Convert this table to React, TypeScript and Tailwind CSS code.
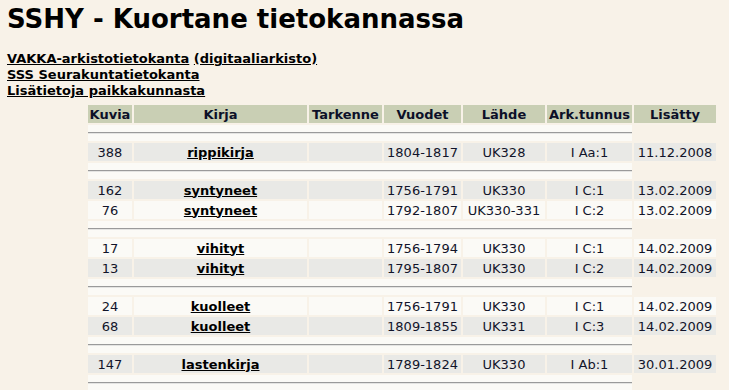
import React from 'react';

type Row = {
  kuvia: string;
  kirja: string;
  vuodet: string;
  lahde: string;
  ark: string;
  lisatty: string;
  gray: boolean;
};

const groups: Row[][] = [
  [{ kuvia: '388', kirja: 'rippikirja', vuodet: '1804-1817', lahde: 'UK328', ark: 'I Aa:1', lisatty: '11.12.2008', gray: true }],
  [
    { kuvia: '162', kirja: 'syntyneet', vuodet: '1756-1791', lahde: 'UK330', ark: 'I C:1', lisatty: '13.02.2009', gray: true },
    { kuvia: '76', kirja: 'syntyneet', vuodet: '1792-1807', lahde: 'UK330-331', ark: 'I C:2', lisatty: '13.02.2009', gray: false },
  ],
  [
    { kuvia: '17', kirja: 'vihityt', vuodet: '1756-1794', lahde: 'UK330', ark: 'I C:1', lisatty: '14.02.2009', gray: false },
    { kuvia: '13', kirja: 'vihityt', vuodet: '1795-1807', lahde: 'UK330', ark: 'I C:2', lisatty: '14.02.2009', gray: true },
  ],
  [
    { kuvia: '24', kirja: 'kuolleet', vuodet: '1756-1791', lahde: 'UK330', ark: 'I C:1', lisatty: '14.02.2009', gray: false },
    { kuvia: '68', kirja: 'kuolleet', vuodet: '1809-1855', lahde: 'UK331', ark: 'I C:3', lisatty: '14.02.2009', gray: true },
  ],
  [{ kuvia: '147', kirja: 'lastenkirja', vuodet: '1789-1824', lahde: 'UK330', ark: 'I Ab:1', lisatty: '30.01.2009', gray: true }],
];

function Separator() {
  return (
    <tr className="h-[16px]">
      <td colSpan={6} className="bg-[#fbfaf6] p-0 align-middle">
        <div className="border-t border-b border-t-[#9a9a9a] border-b-[#e4e4e2]" />
      </td>
      <td className="p-0" />
    </tr>
  );
}

export default function App() {
  const th = 'bg-[#c9cfb4] p-0 text-center font-bold text-[#0c1028]';
  return (
    <div className="min-h-[390px] bg-[#f8f2e8] px-[7px] pt-[4px] font-['DejaVu_Sans',Verdana,sans-serif] text-[13px] text-black">
      <h1 className="text-[26px] font-bold leading-[30px]">SSHY - Kuortane tietokannassa</h1>

      <div className="mt-[17px] flex flex-col font-bold leading-[16px]">
        <div>
          <a href="#" className="underline">VAKKA-arkistotietokanta</a>{' '}
          <a href="#" className="underline">(digitaaliarkisto)</a>
        </div>
        <div>
          <a href="#" className="underline">SSS Seurakuntatietokanta</a>
        </div>
        <div>
          <a href="#" className="underline">Lisätietoja paikkakunnasta</a>
        </div>
      </div>

      <table className="ml-[79px] mt-[4px] w-[632px] table-fixed border-separate border-spacing-[2px] leading-[15px]">
        <colgroup>
          <col className="w-[44px]" />
          <col className="w-[173px]" />
          <col className="w-[73px]" />
          <col className="w-[77px]" />
          <col className="w-[82px]" />
          <col className="w-[85px]" />
          <col className="w-[82px]" />
        </colgroup>
        <thead>
          <tr className="h-[18px]">
            <th className={th}>Kuvia</th>
            <th className={th}>Kirja</th>
            <th className={th}>Tarkenne</th>
            <th className={th}>Vuodet</th>
            <th className={th}>Lähde</th>
            <th className={th}>Ark.tunnus</th>
            <th className={th}>Lisätty</th>
          </tr>
        </thead>
        <tbody className="text-[#11142a]">
          {groups.map((g, gi) => (
            <React.Fragment key={gi}>
              <Separator />
              {g.map((r, ri) => {
                const td = `p-0 text-center whitespace-nowrap ${r.gray ? 'bg-[#e9e9e6]' : 'bg-[#fbfaf6]'}`;
                return (
                  <tr key={ri} className="h-[18px]">
                    <td className={td}>{r.kuvia}</td>
                    <td className={td}>
                      <a href="#" className="font-bold text-black underline">{r.kirja}</a>
                    </td>
                    <td className={td}></td>
                    <td className={td}>{r.vuodet}</td>
                    <td className={td}>{r.lahde}</td>
                    <td className={td}>{r.ark}</td>
                    <td className={td}>{r.lisatty}</td>
                  </tr>
                );
              })}
            </React.Fragment>
          ))}
          <Separator />
        </tbody>
      </table>
    </div>
  );
}
